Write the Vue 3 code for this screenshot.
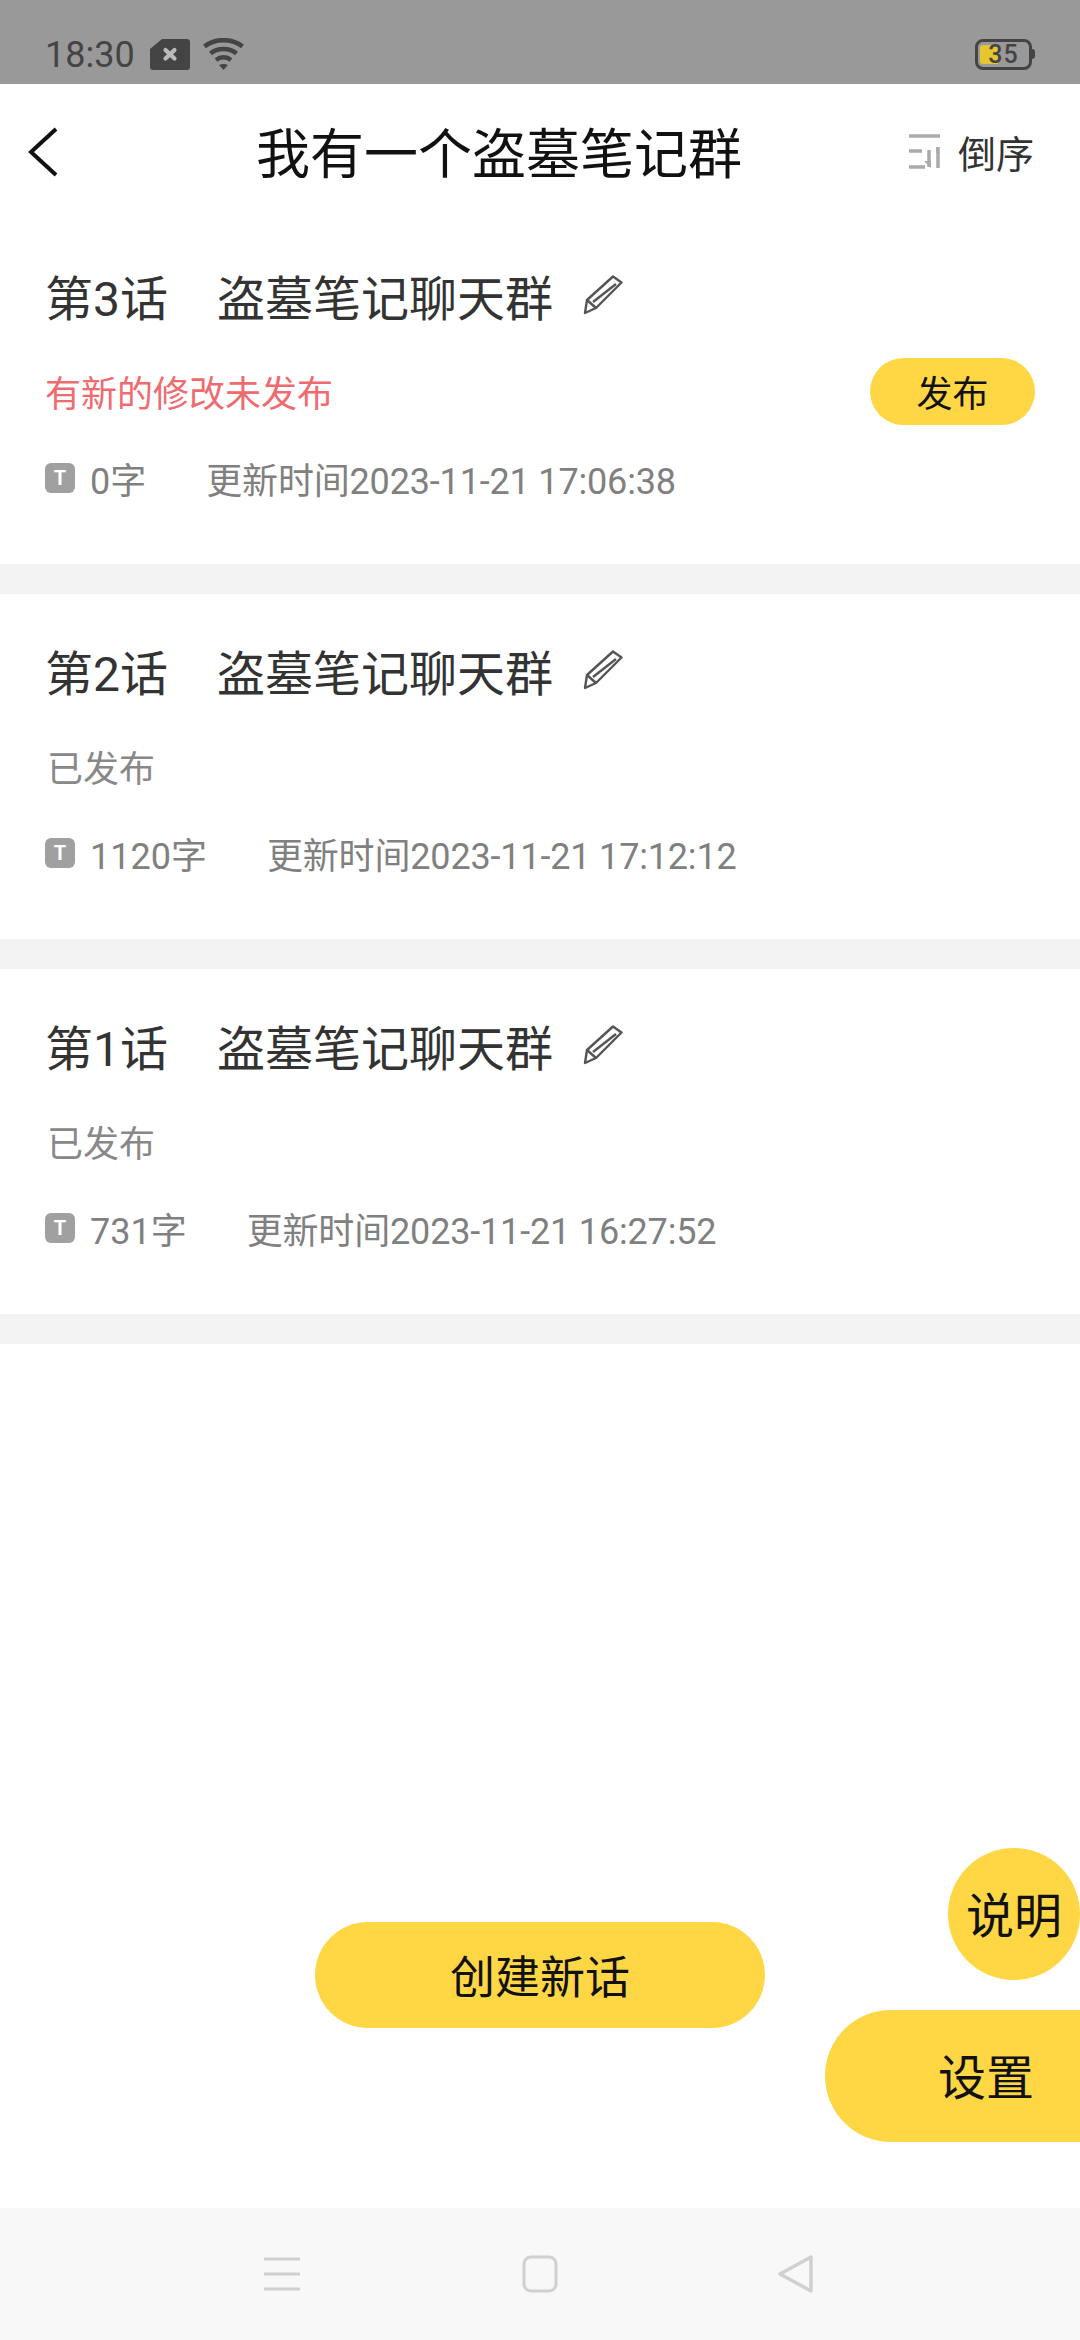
<template>
  <div class="page">
    <!-- status bar -->
    <div class="status-bar">
      <span class="time">18:30</span>
      <svg class="sim" width="40" height="31" viewBox="0 0 40 31">
        <path d="M12 0H37a3 3 0 0 1 3 3V28a3 3 0 0 1-3 3H3a3 3 0 0 1-3-3V10z" fill="#444" />
        <path d="M15.500 11l9 8.500M24.500 11l-9 8.500" stroke="#bbb" stroke-width="4.200" stroke-linecap="round" />
      </svg>
      <svg class="wifi" width="41" height="32" viewBox="0 0 41 32" fill="none" stroke="#444" stroke-width="4.600">
        <path d="M1.500 8.500C12 0 29 0 39.500 8.500" />
        <path d="M7.500 15.500C14.500 9.500 26.500 9.500 33.500 15.500" />
        <path d="M13 22C17.500 18.500 23.500 18.500 28 22" />
        <path d="M16 27L20.500 32L25 27C22 25.500 19 25.500 16 27Z" fill="#444" stroke="none" />
      </svg>
      <div class="battery">
        <div class="battery-body">
          <span class="battery-fill"></span>
          <span class="battery-num">35</span>
        </div>
        <span class="battery-nub"></span>
      </div>
    </div>

    <!-- header -->
    <header class="header">
      <svg class="back" width="30" height="50" viewBox="0 0 30 50" fill="none" stroke="#111" stroke-width="4">
        <path d="M28 2L3 25L28 48" />
      </svg>
      <h1 class="title">我有一个盗墓笔记群</h1>
      <div class="sort">
        <svg width="32" height="35" viewBox="0 0 32 35" fill="none" stroke="#aaa" stroke-width="3.500">
          <path d="M0 2H31" />
          <path d="M0 17H13" />
          <path d="M0 33H16" />
          <path d="M20 16V33" />
          <path d="M29 13V34" />
          <path d="M27 13L31 19L27 19Z" fill="#aaa" stroke="none" />
          <path d="M22 34L15 27L22 27Z" fill="#aaa" stroke="none" />
        </svg>
        <span>倒序</span>
      </div>
    </header>

    <!-- list -->
    <main class="list">
      <section v-for="item in chapters" :key="item.no" class="card">
        <div class="card-title">
          <span>第{{ item.no }}话</span>
          <span class="chapter-name">盗墓笔记聊天群</span>
          <svg class="pencil" width="40" height="40" viewBox="0 0 40 40" fill="none" stroke="#555" stroke-width="2.400" stroke-linejoin="round">
            <path d="M30 1.500L38.500 7.500L13 33L2 38L4 25Z" />
            <path d="M10 27L33 9" />
            <path d="M4 25L13 33" />
          </svg>
        </div>
        <div class="card-status">
          <span :class="item.changed ? 'status-red' : 'status-gray'">{{ item.status }}</span>
          <button v-if="item.changed" class="publish">发布</button>
        </div>
        <div class="card-meta">
          <span class="t-icon">T</span>
          <span class="words">{{ item.words }}字</span>
          <span class="updated">更新时间{{ item.updated }}</span>
        </div>
      </section>
    </main>

    <!-- nav bar -->
    <nav class="nav-bar">
      <svg width="36" height="34" viewBox="0 0 36 34" stroke="#d0d0d0" stroke-width="3">
        <path d="M0 2H36M0 17H36M0 32H36" />
      </svg>
      <svg width="36" height="38" viewBox="0 0 36 38" fill="none" stroke="#d0d0d0" stroke-width="3">
        <rect x="2" y="2" width="32" height="34" rx="7" />
      </svg>
      <svg class="nav-back" width="38" height="40" viewBox="0 0 38 40" fill="none" stroke="#d0d0d0" stroke-width="3.500" stroke-linejoin="round">
        <path d="M34 3L3 20L34 37Z" />
      </svg>
    </nav>

    <!-- floating buttons -->
    <button class="create">创建新话</button>
    <button class="explain">说明</button>
    <button class="settings">设置</button>
  </div>
</template>

<script setup>
const chapters = [
  { no: 3, status: '有新的修改未发布', changed: true, words: 0, updated: '2023-11-21 17:06:38' },
  { no: 2, status: '已发布', changed: false, words: 1120, updated: '2023-11-21 17:12:12' },
  { no: 1, status: '已发布', changed: false, words: 731, updated: '2023-11-21 16:27:52' }
]
</script>

<style>
html,
body {
  margin: 0;
  background: #fff;
}
</style>

<style scoped>
.page {
  position: relative;
  width: 1080px;
  height: 2340px;
  display: flex;
  flex-direction: column;
  overflow: hidden;
  background: #fff;
  font-family: Roboto, "Noto Sans CJK SC", sans-serif;
}

.status-bar {
  height: 84px;
  flex: none;
  display: flex;
  align-items: center;
  padding: 24px 45px 0 45px;
  box-sizing: border-box;
  background: #999;
  color: #444;
}

.time {
  margin-top: 2px;
  font-size: 36px;
  line-height: 36px;
}

.sim {
  margin-left: 15px;
}

.wifi {
  margin-left: 13px;
}

.battery {
  margin-left: auto;
  display: flex;
  align-items: center;
}

.battery-body {
  position: relative;
  width: 57px;
  height: 31px;
  box-sizing: border-box;
  border: 3px solid #444;
  border-radius: 8px;
  display: flex;
  align-items: center;
  justify-content: center;
}

.battery-fill {
  position: absolute;
  left: 2px;
  top: 3px;
  bottom: 3px;
  width: 18px;
  border-radius: 3px 0 0 3px;
  background: #e5c62e;
}

.battery-num {
  position: relative;
  font-size: 25px;
  font-weight: 500;
  letter-spacing: 1px;
  color: #444;
}

.battery-nub {
  width: 3px;
  height: 10px;
  border-radius: 0 3px 3px 0;
  background: #444;
}

.header {
  height: 135px;
  flex: none;
  display: flex;
  align-items: center;
  padding: 0 46px 0 28px;
  box-sizing: border-box;
}

.back {
  flex: none;
}

.title {
  margin: 0 0 3px 198px;
  font-size: 54px;
  font-weight: 400;
  color: #111;
  white-space: nowrap;
}

.sort {
  margin-left: auto;
  display: flex;
  align-items: center;
  gap: 17px;
  font-size: 38px;
  color: #333;
}

.list {
  flex: 1;
}

.card {
  height: 345px;
  margin-bottom: 30px;
  padding: 41px 45px 0;
  box-sizing: border-box;
  box-shadow: 0 30px 0 #f3f3f3;
}

.card-title {
  height: 70px;
  display: flex;
  align-items: center;
  font-size: 48px;
  color: #333;
}

.chapter-name {
  margin-left: 49px;
}

.pencil {
  margin-left: 30px;
}

.card-status {
  height: 67px;
  margin-top: 28px;
  display: flex;
  align-items: center;
  justify-content: space-between;
  font-size: 36px;
}

.status-red {
  margin-bottom: 2px;
  color: #ef6b70;
}

.status-gray {
  margin-bottom: 2px;
  margin-left: 2px;
  color: #888;
}

.publish {
  width: 165px;
  height: 67px;
  padding: 0 0 2px;
  border: none;
  border-radius: 34px;
  background: #ffd644;
  font-family: inherit;
  font-size: 36px;
  color: #111;
}

.card-meta {
  height: 50px;
  margin-top: 28px;
  display: flex;
  align-items: center;
  font-size: 36px;
  color: #808080;
}

.t-icon {
  width: 30px;
  height: 30px;
  border-radius: 6px;
  background: #a0a0a0;
  color: #fff;
  font-size: 20px;
  font-weight: 700;
  line-height: 30px;
  text-align: center;
}

.words {
  margin-left: 15px;
}

.updated {
  margin-left: 60px;
  letter-spacing: -0.17px;
}

.nav-bar {
  height: 132px;
  flex: none;
  display: flex;
  align-items: center;
  gap: 222px;
  padding-left: 264px;
  box-sizing: border-box;
  background: #f8f8f8;
}

.nav-back {
  margin-left: -3px;
}

.create,
.explain,
.settings {
  position: absolute;
  border: none;
  background: #ffd644;
  font-family: inherit;
  font-size: 48px;
  color: #111;
}

.create {
  left: 315px;
  top: 1922px;
  width: 450px;
  height: 106px;
  padding: 0 0 2px;
  border-radius: 53px;
  font-size: 45px;
}

.explain {
  left: 948px;
  top: 1848px;
  width: 132px;
  height: 132px;
  padding: 0 0 4px;
  border-radius: 50%;
  white-space: nowrap;
}

.settings {
  left: 825px;
  top: 2010px;
  width: 255px;
  height: 132px;
  padding: 0 0 4px 113px;
  border-radius: 66px 0 0 66px;
  box-sizing: border-box;
  text-align: left;
}
</style>
